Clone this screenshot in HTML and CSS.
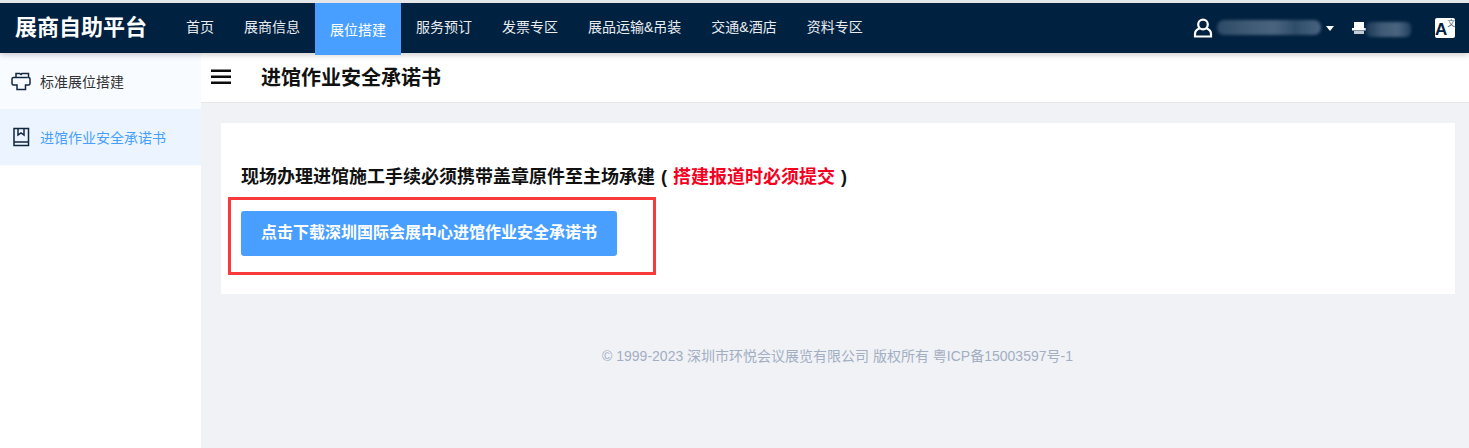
FILE: index.html
```html
<!DOCTYPE html>
<html lang="zh-CN">
<head>
<meta charset="utf-8">
<title>进馆作业安全承诺书</title>
<link rel="stylesheet" href="styles.css">
</head>
<body>
<header class="topbar">
  <div class="logo">展商自助平台</div>
  <nav class="nav">
    <a class="nav-item">首页</a>
    <a class="nav-item">展商信息</a>
    <a class="nav-item active">展位搭建</a>
    <a class="nav-item">服务预订</a>
    <a class="nav-item">发票专区</a>
    <a class="nav-item">展品运输&amp;吊装</a>
    <a class="nav-item">交通&amp;酒店</a>
    <a class="nav-item">资料专区</a>
  </nav>
  <div class="tools">
    <svg class="user-icon" width="20" height="20" viewBox="0 0 20 20" fill="none" stroke="#fff" stroke-width="2.200"><circle cx="10" cy="6.500" r="4.800"/><path d="M6.500 10.500C3.500 11.500 2 13.500 2 16v2.500h16V16c0-2.500-1.500-4.500-4.500-5.500"/></svg>
    <span class="blur blur-name"></span>
    <span class="caret"></span>
    <svg class="shop-icon" width="14" height="14" viewBox="0 0 14 14"><path d="M2 1h10v6H2z" fill="#fff"/><path d="M0 7h14v2.500H0z" fill="#fff"/><path d="M2 10h10v3H2z" fill="#c5ccd6"/></svg>
    <span class="blur blur-shop"></span>
    <span class="lang"><span class="lang-a">A</span><span class="lang-z">文</span></span>
  </div>
</header>
<div class="layout">
  <aside class="sidebar">
    <div class="side-item">
      <svg width="20" height="20" viewBox="0 0 20 20" fill="none" stroke="#12263f" stroke-width="1.500"><path d="M5 6.500V2.500h3.500l1.500 1 1-1h6.500v4M5 6.500H2.500Q1 6.500 1 8v4.500Q1 14 2.500 14H6v4.500h8.500V14h3Q19 14 19 12.500V8q0-1.500-1.500-1.500h-1"/><path d="M5 6.500h11.500"/></svg>
      <span>标准展位搭建</span>
    </div>
    <div class="side-item current">
      <svg width="20" height="20" viewBox="0 0 20 20" fill="none" stroke="#12263f" stroke-width="1.500"><path d="M3 1.500h14.500v17H3zM3 15h14.500"/><path d="M7 1.500v6.500l3-2 3 2V1.500"/></svg>
      <span>进馆作业安全承诺书</span>
    </div>
  </aside>
  <main class="main">
    <div class="page-head">
      <svg class="menu" width="20" height="16" viewBox="0 0 20 16"><path d="M0 .5h20v2.500H0zM0 6.500h20v2.500H0zM0 12.500h20v2.500H0z" fill="#0c0c0c"/></svg>
      <h1 class="page-title">进馆作业安全承诺书</h1>
    </div>
    <section class="card">
      <p class="notice">现场办理进馆施工手续必须携带盖章原件至主场承建 ( <span class="required">搭建报道时必须提交</span> )</p>
      <div class="highlight">
        <a class="download">点击下载深圳国际会展中心进馆作业安全承诺书</a>
      </div>
    </section>
    <footer class="footer">© 1999-2023 深圳市环悦会议展览有限公司 版权所有 粤ICP备15003597号-1</footer>
  </main>
</div>
</body>
</html>
```
FILE: styles.css
```css
* { box-sizing: border-box; }
html, body { height: 100%; }
body {
  margin: 0;
  height: 448px;
  overflow: hidden;
  display: flex;
  flex-direction: column;
  border-top: 3px solid #e4e6e9;
  background: #f0f2f6;
  font-family: "Liberation Sans", "Noto Sans CJK SC", sans-serif;
}
.topbar {
  flex: none;
  height: 50px;
  display: flex;
  align-items: flex-start;
  background: #002140;
  color: #fff;
  position: relative;
  z-index: 2;
  box-shadow: 0 2px 6px rgba(0, 0, 0, .2);
}
.logo {
  width: 171px;
  padding-left: 15px;
  font-size: 22px;
  font-weight: 700;
  line-height: 49px;
  white-space: nowrap;
}
.nav { display: flex; }
.nav-item {
  padding: 0 15px;
  font-size: 14px;
  line-height: 49px;
  color: #e8ecf0;
  white-space: nowrap;
}
.nav-item.active {
  height: 52px;
  line-height: 54px;
  background: #499fff;
  color: #fff;
}
.tools {
  margin-left: auto;
  height: 50px;
  padding-right: 14px;
  display: flex;
  align-items: center;
}
.user-icon { margin-right: 4px; }
.blur { display: block; filter: blur(1.500px); }
.blur-name {
  width: 104px;
  height: 15px;
  margin-top: -2px;
  border-radius: 7px;
  background: linear-gradient(90deg, #2c4a66, #3f5a75 30%, #4a6480 55%, #2f4d69 75%, #486380);
}
.caret {
  margin: 1px 0 0 5px;
  border: 4px solid transparent;
  border-top: 5px solid #fff;
  border-bottom: 0;
}
.shop-icon { margin: -1px 0 0 18px; }
.blur-shop {
  width: 45px;
  height: 15px;
  margin: 2px 0 0 0;
  background: linear-gradient(90deg, #1a3856, #3f5a75 35%, #4a6480 70%, #21405e);
  border-radius: 5px;
}
.lang {
  width: 20px;
  height: 20px;
  margin-left: 24px;
  border-radius: 2px;
  background: #fff;
  color: #002140;
  display: flex;
  overflow: hidden;
}
.lang-a { font-size: 17px; font-weight: 700; line-height: 24px; }
.lang-z { font-size: 8px; line-height: 11px; color: #4b6178; }
.layout { flex: 1; display: flex; min-height: 0; }
.sidebar { flex: none; width: 201px; background: #fff; }
.side-item {
  height: 56px;
  padding-left: 11px;
  display: flex;
  align-items: center;
  gap: 9px;
  font-size: 14px;
  color: #333;
  background: #f8fbff;
  white-space: nowrap;
}
.side-item.current { background: #ecf5ff; color: #499fff; }
.main { flex: 1; min-width: 0; display: flex; flex-direction: column; }
.page-head {
  flex: none;
  height: 50px;
  padding-left: 10px;
  display: flex;
  align-items: center;
  background: #fff;
  border-bottom: 1px solid #e6e6e6;
}
.menu { margin-top: -2px; }
.page-title {
  margin: -2px 0 0 30px;
  font-size: 20px;
  font-weight: 700;
  color: #111;
}
.card {
  flex: none;
  height: 171px;
  margin: 20px 14px 0 20px;
  padding: 40px 0 0 20px;
  background: #fff;
}
.notice {
  margin: 0;
  font-size: 18px;
  font-weight: 700;
  line-height: 28px;
  word-spacing: 1px;
  color: #111;
}
.required { color: #f5001e; }
.highlight {
  width: 428px;
  height: 78px;
  margin: 6px 0 0 -13px;
  padding: 11px 0 0 10px;
  border: 3px solid #f83a3a;
}
.download {
  display: block;
  width: 376px;
  height: 45px;
  border-radius: 3px;
  background: #499fff;
  color: #fff;
  font-size: 16px;
  font-weight: 700;
  line-height: 43px;
  text-align: center;
  white-space: nowrap;
}
.footer {
  margin-top: 52px;
  padding-left: 5px;
  text-align: center;
  font-size: 14px;
  line-height: 20px;
  color: #a3aec2;
}
```
